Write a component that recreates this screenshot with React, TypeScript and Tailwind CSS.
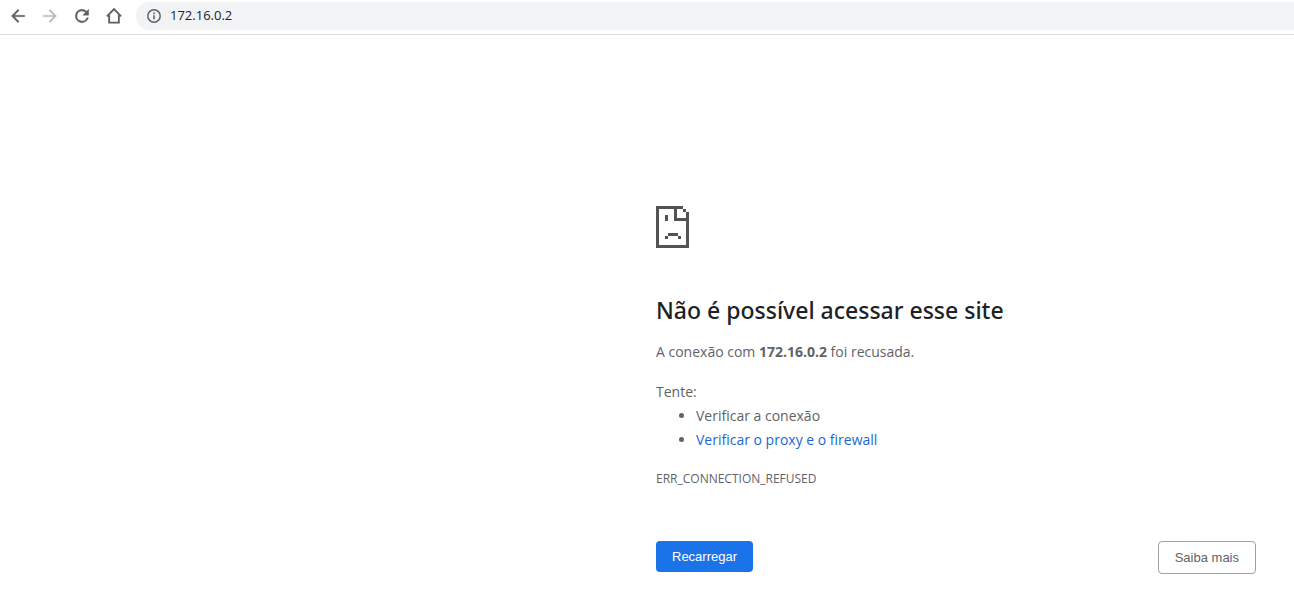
import type { ReactNode } from "react";

const host = "172.16.0.2";

function ToolbarButton({ label, disabled, children }: { label: string; disabled?: boolean; children: ReactNode }) {
  return (
    <button
      type="button"
      aria-label={label}
      disabled={disabled}
      className="flex size-5 items-center justify-center text-[#5a5d61] disabled:text-[#bababa]"
    >
      <svg viewBox="0 0 24 24" className="size-5" fill="currentColor" aria-hidden="true">
        {children}
      </svg>
    </button>
  );
}

function Toolbar() {
  return (
    <header className="flex h-[35px] items-center border-b border-[#dadce0] pb-[2px] pl-2">
      <nav className="flex gap-3">
        <ToolbarButton label="Voltar">
          <path d="M20 11H7.8l5.6-5.6L12 4l-8 8 8 8 1.4-1.4L7.8 13H20z" stroke="currentColor" strokeWidth="0.3" />
        </ToolbarButton>
        <ToolbarButton label="Avançar" disabled>
          <path d="M4 11h12.2l-5.6-5.6L12 4l8 8-8 8-1.4-1.4 5.6-5.6H4z" stroke="currentColor" strokeWidth="0.3" />
        </ToolbarButton>
        <ToolbarButton label="Atualizar">
          <path
            d="M17.65 6.35A7.96 7.96 0 0 0 12 4a8 8 0 1 0 7.73 10h-2.08A6 6 0 1 1 12 6c1.66 0 3.14.69 4.22 1.78L13 11h7V4z"
            stroke="currentColor"
            strokeWidth="0.5"
          />
        </ToolbarButton>
        <ToolbarButton label="Página inicial">
          <path d="M3.5 12.5 12 3.8l8.5 8.7M6.2 11v9h11.6v-9" fill="none" stroke="currentColor" strokeWidth="2.2" />
        </ToolbarButton>
      </nav>
      <div className="ml-3 flex h-7 flex-1 items-center gap-2 rounded-l-full bg-[#f1f3f4] pl-[10px]">
        <svg viewBox="0 0 16 16" className="size-4 text-[#5f6368]" aria-hidden="true">
          <circle cx="8" cy="8" r="6.2" fill="none" stroke="currentColor" strokeWidth="1.5" />
          <path d="M7.2 7.2h1.6v4H7.2zM7.2 4.6h1.6v1.6H7.2z" fill="currentColor" />
        </svg>
        <input
          type="text"
          aria-label="Barra de endereço"
          defaultValue={host}
          className="min-w-0 flex-1 bg-transparent font-['Open_Sans',sans-serif] text-[13px] text-[#202124] outline-none"
        />
      </div>
    </header>
  );
}

function SadPageIcon() {
  return (
    <svg viewBox="0 0 33 42" className="h-[42px] w-[33px]" fill="#535353" shapeRendering="crispEdges" aria-hidden="true">
      <path d="M0 0h27v3H21v9h12v3H18V3H3v36h27V15h3v27H0z" />
      <path d="M27 3h3v3h-3zM30 6h3v9h-3z" />
      <path d="M9 9h3v6H9zM12 27h10v3H12zM9 30h3v3H9zM22 30h3v3h-3z" />
    </svg>
  );
}

export default function App() {
  return (
    <div className="min-h-screen bg-white">
      <Toolbar />
      <main className="mr-[38px] ml-auto max-w-[600px] pt-[171px] font-['Open_Sans',sans-serif] text-[14px] leading-6 text-[#5f6368]">
        <SadPageIcon />
        <h1 className="mt-12 font-['Noto_Sans',sans-serif] text-[23px] leading-7 font-medium text-[#202124]">
          Não é possível acessar esse site
        </h1>
        <p className="mt-4">
          A conexão com <strong className="font-bold">{host}</strong> foi recusada.
        </p>
        <p className="mt-4">Tente:</p>
        <ul className="list-disc pl-10">
          <li>Verificar a conexão</li>
          <li>
            <a href="#proxy" className="text-[#1967d2]">
              Verificar o proxy e o firewall
            </a>
          </li>
        </ul>
        <p className="mt-4 text-[12px] leading-[22px]">ERR_CONNECTION_REFUSED</p>
        <div className="mt-[51px] flex items-start justify-between font-['Liberation_Sans',Arial,sans-serif] text-[13px] leading-[15px]">
          <button type="button" className="rounded bg-[#1a73e8] px-4 py-2 text-white">
            Recarregar
          </button>
          <button type="button" className="rounded border border-[#9aa0a6] px-4 py-2 text-[#5f6368]">
            Saiba mais
          </button>
        </div>
      </main>
    </div>
  );
}
